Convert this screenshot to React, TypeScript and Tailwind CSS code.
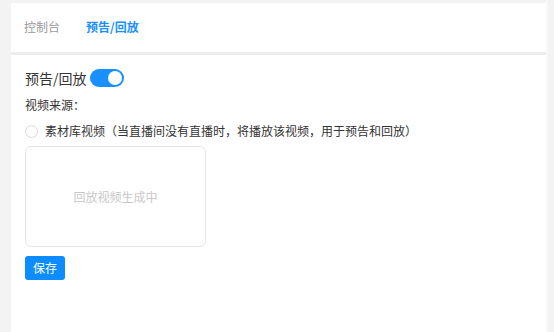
import React from "react";

export default function App() {
  return (
    <div
      className="w-[554px] h-[332px] bg-[#f3f3f3] flex overflow-hidden"
      style={{ fontFamily: '"Noto Sans CJK SC", "Noto Sans", sans-serif' }}
    >
      <div className="ml-[11px] w-[535px] flex flex-col pt-[3px]">
        <div className="h-[49px] bg-white flex items-end pb-[16px] pl-[13px] gap-[26px] text-[12px]">
          <span className="text-[#999]">控制台</span>
          <span className="text-[#1890ff] font-bold">预告/回放</span>
        </div>
        <div className="h-[3px] bg-[#ececec]" />
        <div className="flex-1 bg-white pl-[14px] pt-[13px] flex flex-col">
          <div className="flex items-center h-[20px]">
            <span className="text-[14px] text-[#333]">预告/回放</span>
            <span className="ml-[3px] w-[34px] h-[18px] rounded-full bg-[#1890ff] relative">
              <span className="absolute right-[2px] top-[2px] w-[14px] h-[14px] rounded-full bg-white" />
            </span>
          </div>
          <div className="mt-[8px] text-[12px] text-[#333] h-[18px] leading-[18px]">视频来源：</div>
          <div className="mt-[8px] flex items-center h-[18px] text-[12px] text-[#333]">
            <span className="w-[13px] h-[13px] rounded-full border border-[#d9d9d9] bg-white" />
            <span className="ml-[7px]">素材库视频（当直播间没有直播时，将播放该视频，用于预告和回放）</span>
          </div>
          <div className="mt-[6px] w-[181px] h-[101px] rounded-[6px] border border-[#e5e5e5] flex items-center justify-center text-[12px] text-[#c8c8c8]">
            回放视频生成中
          </div>
          <button className="mt-[9px] w-[40px] h-[24px] rounded-[3px] bg-[#0d8cff] text-white text-[12px] flex items-center justify-center">
            保存
          </button>
        </div>
      </div>
      <div className="w-[2px] bg-[#f8f8f8]" />
    </div>
  );
}
